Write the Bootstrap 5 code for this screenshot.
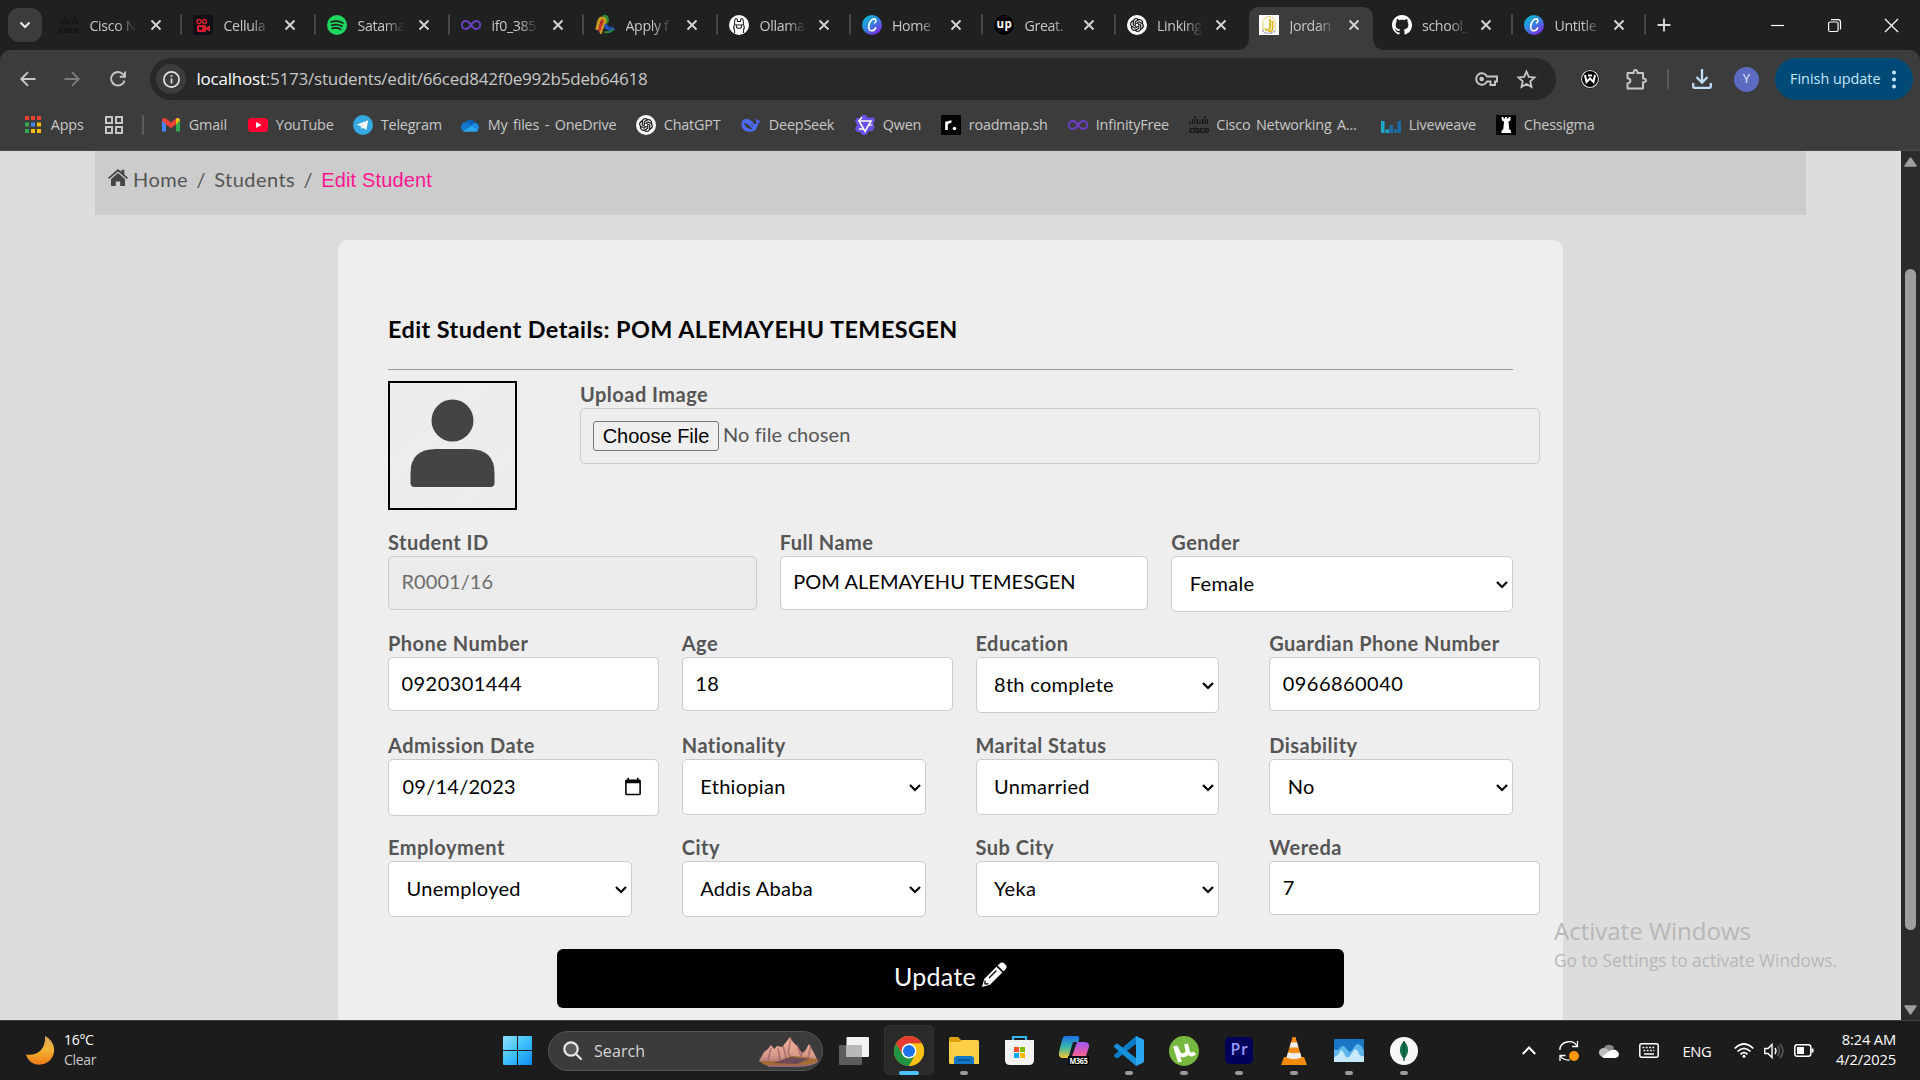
<!DOCTYPE html>
<html lang="en">
<head>
<meta charset="utf-8">
<title>Edit Student</title>
<link href="https://cdn.jsdelivr.net/npm/bootstrap@5.3.0/dist/css/bootstrap.min.css" rel="stylesheet">
<style>
:root{--ui:"Open Sans","Noto Sans",sans-serif;--doc:Lato,"Open Sans",sans-serif}
body{width:1920px;height:1080px;overflow:hidden;font-family:var(--ui);background:#ddd}
svg{display:block;overflow:visible;flex:none}
/* tab strip */
.tabstrip{height:50px;background:#1f2120;grid-template-columns:46px repeat(5,134px) repeat(7,132.5px) 44px 1fr;display:grid}
.tabsearch{width:34px;height:34px;border-radius:11px;background:#3c3c3c;margin:8px 0 0 8px}
.tab-item{position:relative;display:flex;align-items:center;padding-left:13px;font-size:14.2px;letter-spacing:-.35px;color:#c7c7c7}
.tab-item.sep::before{content:"";position:absolute;left:0;top:14px;width:2px;height:21px;background:#474747;border-radius:1px}
.tab-name{width:47px;margin:1px 0 0 10.5px;white-space:nowrap;overflow:hidden;-webkit-mask-image:linear-gradient(90deg,#000 58%,transparent 98%);mask-image:linear-gradient(90deg,#000 58%,transparent 98%)}
.tab-item .cross{margin-left:13px}
.tab-item:nth-child(n+7) .cross{margin-left:11px}
.tab-item .cross.plus{margin-left:0}
.tab-on{z-index:1}
.tab-on>.tab-shape{position:absolute;left:-9px;top:7px;z-index:-1}
.cross{stroke:#d5d5d5;stroke-width:1.9;fill:none}
.winctl{display:grid;grid-template-columns:57px 57px 57px;justify-content:end;align-items:center;justify-items:center;stroke:#fff;fill:none;stroke-width:1.2}
/* toolbar */
.chrome-bars{height:101px;background:#3c3c3c;border-radius:10px 10px 0 0;border-bottom:1px solid #4a4a4a}
.toolrow{height:58px;display:grid;align-items:center;justify-items:center;grid-template-columns:5px 45px 44px 47px 9px 1406px 10.5px 46.5px 46px 17px 51px 39px 9px 137.5px}
.omni{justify-self:stretch;height:42px;border-radius:21px;background:#282828;color:#c7c7c7;font-size:17px;letter-spacing:-.22px}
.omni .info{width:30px;height:30px;border-radius:15px;background:#3c3c3c;margin:0 10.5px 0 6px}
.upd{height:42px;width:100%;border-radius:21px;background:#004a77;color:#c2e7ff;font-size:14.4px;padding-left:15px}
.avatar{width:25px;height:25px;border-radius:50%;background:#5c6bc0;color:#e8e8ff;font-size:13px}
.marks{height:34px;display:grid;align-items:center;margin-left:24px;font-size:14.4px;letter-spacing:-.2px;word-spacing:2px;color:#c7c7c7;white-space:nowrap;grid-template-columns:80px 38px 20px 86px 105px 107px 176px 105px 114px 86px 127px 120.5px 192.5px 115px 120px}
.marks>div{display:flex;align-items:center}
.marks svg{width:20px;height:20px;margin-right:7.8px}
.vline{width:2px;height:20px;background:#5b5b5b;border-radius:1px}
.page-area{height:869px;overflow:hidden}
.doc{width:1901px;font-family:var(--doc);font-size:20px;color:#555}
.crumbs{width:1711px;height:64px;margin-left:95px;background:#ccc;padding:13px 0 0 13px;letter-spacing:.45px}
.crumbs .slash{margin:0 8.2px 0 8.4px}
.crumbs .pink{color:#ff1493;font-family:"Liberation Sans",Arial,sans-serif;letter-spacing:.15px;padding-top:1px}
.sheet{width:1225px;height:900px;margin:25px 0 0 338px;background:#eee;border-radius:10px;padding:75px 50px 0}
.sheet h3{font-size:23.4px;font-weight:700;color:#000;letter-spacing:.44px;line-height:28px;height:54px;margin:0}
.sheet hr{border-top:1px solid #9a9a9a;opacity:1}
.photo{width:129px;height:129px;border:2px solid #000;margin-right:63px;background:repeating-linear-gradient(135deg,#eee 0 3px,#ebebeb 3px 5px)}
.lbl{font-weight:700;line-height:26px;height:27px;white-space:nowrap;letter-spacing:.48px}
.filebox{width:960px;height:56px;border:1px solid #ccc;border-radius:5px;padding-left:12px;letter-spacing:.1px}
.filebtn{font:20px "Liberation Sans",Arial,sans-serif;height:30px;width:126px;border:1px solid #767676;border-radius:3px;background:#efefef;color:#000;padding:0;line-height:26px}
.grid3,.grid4{display:grid;column-gap:50px}
.grid3{grid-template-columns:repeat(3,341.67px);height:101px}
.grid4{grid-template-columns:repeat(4,243.75px);height:102px}
.sheet .form-control,.sheet .form-select{font-size:20px;color:#000;border:1px solid #ccc;border-radius:5px;line-height:27px}
.sheet .form-control{height:54px;width:calc(100% + 27px);padding:10px 12.5px 12px;letter-spacing:.45px}
.sheet .grid3 .form-control{letter-spacing:.05px;padding:9px 12.5px 13px}
.sheet .form-control:disabled{background:#ebebeb;color:#6d6d6d}
.sheet .form-control[type=date]{height:57px;padding:11px 12.5px 13px 13.5px;letter-spacing:.25px}
.sheet .form-select{height:56px;padding:11px 17px 13px 17.5px;letter-spacing:.3px;background:#fff url("data:image/svg+xml,%3Csvg xmlns='http://www.w3.org/2000/svg' viewBox='0 0 12 8'%3E%3Cpath d='M1 1l5 5 5-5' fill='none' stroke='%23000' stroke-width='2.2'/%3E%3C/svg%3E") no-repeat right 4px top 24px/12px 8px}
.upbtn{width:787.5px;height:59px;background:#000;color:#fff;border-radius:6px;font-size:25px;margin:4.5px auto 0;letter-spacing:.3px}
.vscroll{width:19px;background:#2b2b2b;padding:6px 3px 4px 3px}
.thumb{width:11px;height:661px;border-radius:6px;background:#9f9f9f;margin:102px 0 75px 1px}
.wmark{position:absolute;left:1554px;top:913px;color:#b7b7b7;line-height:36px;font-size:24px;white-space:nowrap}
.wmark div+div{font-size:17.3px;line-height:24px}
/* taskbar */
.tbar{height:60px;background:#1c1c1c;border-top:1px solid #3c403d;color:#fff;display:grid;align-items:center;justify-items:center;grid-template-columns:490px 55px 3px 275px 4px repeat(11,54.95px) 1fr 40px 40px 40px 40px 56px 4px 30px 30px 30px 77px 24px;font-size:14px;letter-spacing:-.3px;line-height:20px}
.tbar>div{position:relative;display:flex;align-items:center;justify-content:center;height:59px}
.wtext{margin:-2px 0 0 10px}
.clock{font-size:14.7px;letter-spacing:-.15px;margin-top:-3px}
.find{width:275px;height:40px!important;border-radius:20px;background:#3b3b3b;border:1px solid #555;justify-content:start!important;font-size:16px;color:#d5d5d5;letter-spacing:.1px}
.run::after{content:"";position:absolute;bottom:5px;left:23.5px;width:8px;height:4px;border-radius:2px;background:#999}
.run.cur::after{left:17px;width:20px;background:#4cc2ff}
.cur::before{content:"";position:absolute;left:2px;top:4px;width:50px;height:50px;border-radius:5px;background:#2a2a2a;border:1px solid #333}
.cur svg{position:relative}
.tbar>.app{width:55px}
</style>
<script src="https://cdn.jsdelivr.net/npm/bootstrap@5.3.0/dist/js/bootstrap.bundle.min.js"></script>
</head>
<body class="d-flex flex-column m-0">
<svg width="0" height="0" class="position-absolute">
<defs>
<linearGradient id="gcanva" x1="0" y1="0" x2=".7" y2="1"><stop offset="0" stop-color="#00c4cc"/><stop offset=".5" stop-color="#2f8be0"/><stop offset="1" stop-color="#7d2ae8"/></linearGradient>
<linearGradient id="gmoon" x1="0" y1="0" x2="0" y2="1"><stop offset="0" stop-color="#d9a066"/><stop offset=".45" stop-color="#f2b632"/><stop offset="1" stop-color="#f07a1a"/></linearGradient>
<linearGradient id="gwin" x1="0" y1="0" x2="1" y2="1"><stop offset="0" stop-color="#8fe3ff"/><stop offset=".5" stop-color="#3ec0fb"/><stop offset="1" stop-color="#0a8cf0"/></linearGradient>
<linearGradient id="gm1" x1="0" y1="0" x2="0" y2="1"><stop offset="0" stop-color="#1c6fe8"/><stop offset=".5" stop-color="#37b8a8"/><stop offset="1" stop-color="#f2c230"/></linearGradient>
<linearGradient id="gm2" x1="0" y1="0" x2="0" y2="1"><stop offset="0" stop-color="#9a5cf0"/><stop offset=".5" stop-color="#e85aa8"/><stop offset="1" stop-color="#ff9a4a"/></linearGradient>
<linearGradient id="grock" x1="0" y1="0" x2="0" y2="1"><stop offset="0" stop-color="#f4b39a"/><stop offset=".6" stop-color="#d99a88"/><stop offset="1" stop-color="#8a6070"/></linearGradient>
</defs>
<symbol id="x" viewBox="0 0 12 12"><path d="M1.5 1.5l9 9m0-9l-9 9"/></symbol>
<symbol id="cisco" viewBox="0 0 20 20"><path d="M1 6v3M3.5 4v5M6 1v8M8.5 4v5M11 6v3M13.5 4v5M16 1v8M18.5 4v5" stroke="#111" stroke-width="1.1"/><text x="0" y="18" font-family="Open Sans,sans-serif" font-weight="700" font-size="9" textLength="20" fill="#111">cisco</text></symbol>
<symbol id="inf" viewBox="0 0 20 20"><path d="M10 10C8 7 6.500 6 4.800 6a4 4 0 000 8C6.500 14 8 13 10 10s3.500-4 5.200-4a4 4 0 010 8C13.500 14 12 13 10 10z" fill="none" stroke="#6b3fc4" stroke-width="2"/></symbol>
<symbol id="canva" viewBox="0 0 20 20"><circle cx="10" cy="10" r="10" fill="url(#gcanva)"/><path d="M12.600 7.900c1.700-.9 2-4-.5-4-2.900 0-5.400 4.400-5.400 7.900 0 2.500 1.200 4 3.100 4 1.700 0 3.200-1.300 3.900-2.900" fill="none" stroke="#fff" stroke-width="1.600" stroke-linecap="round"/></symbol>
<symbol id="gpt" viewBox="0 0 20 20"><circle cx="10" cy="10" r="10" fill="#fff"/><g transform="translate(3.200 3.200) scale(.567)"><path d="M22.2819 9.8211a5.9847 5.9847 0 0 0-.5157-4.9108 6.0462 6.0462 0 0 0-6.5098-2.9A6.0651 6.0651 0 0 0 4.9807 4.1818a5.9847 5.9847 0 0 0-3.9977 2.9 6.0462 6.0462 0 0 0 .7427 7.0966 5.98 5.98 0 0 0 .511 4.9107 6.051 6.051 0 0 0 6.5146 2.9001A5.9847 5.9847 0 0 0 13.2599 24a6.0557 6.0557 0 0 0 5.7718-4.2058 5.9894 5.9894 0 0 0 3.9977-2.9001 6.0557 6.0557 0 0 0-.7475-7.0729zm-9.022 12.6081a4.4755 4.4755 0 0 1-2.8764-1.0408l.1419-.0804 4.7783-2.7582a.7948.7948 0 0 0 .3927-.6813v-6.7369l2.02 1.1686a.071.071 0 0 1 .038.052v5.5826a4.504 4.504 0 0 1-4.4945 4.4944zm-9.6607-4.1254a4.4708 4.4708 0 0 1-.5346-3.0137l.142.0852 4.783 2.7582a.7712.7712 0 0 0 .7806 0l5.8428-3.3685v2.3324a.0804.0804 0 0 1-.0332.0615L9.74 19.9502a4.4992 4.4992 0 0 1-6.1408-1.6464zM2.3408 7.8956a4.485 4.485 0 0 1 2.3655-1.9728V11.6a.7664.7664 0 0 0 .3879.6765l5.8144 3.3543-2.0201 1.1685a.0757.0757 0 0 1-.071 0l-4.8303-2.7865A4.504 4.504 0 0 1 2.3408 7.872zm16.5963 3.8558L13.1038 8.364 15.1192 7.2a.0757.0757 0 0 1 .071 0l4.8303 2.7913a4.4944 4.4944 0 0 1-.6765 8.1042v-5.6772a.79.79 0 0 0-.407-.667zm2.0107-3.0231l-.142-.0852-4.7735-2.7818a.7759.7759 0 0 0-.7854 0L9.409 9.2297V6.8974a.0662.0662 0 0 1 .0284-.0615l4.8303-2.7866a4.4992 4.4992 0 0 1 6.6802 4.66zM8.3065 12.863l-2.02-1.1638a.0804.0804 0 0 1-.038-.0567V6.0742a4.4992 4.4992 0 0 1 7.3757-3.4537l-.142.0805L8.704 5.459a.7948.7948 0 0 0-.3927.6813zm1.0976-2.3654l2.602-1.4998 2.6069 1.4998v2.9994l-2.5974 1.4997-2.6067-1.4997Z" stroke="#000" stroke-width=".5"/></g></symbol>
</svg>

<header class="tabstrip">
  <div><div class="tabsearch d-flex align-items-center justify-content-center"><svg width="12" height="8" viewBox="0 0 12 8"><path d="M1.500 1.500L6 6l4.500-4.500" fill="none" stroke="#e8e8e8" stroke-width="2.200"/></svg></div></div>
  <div class="tab-item"><svg width="20" height="20"><use href="#cisco"/></svg><span class="tab-name">Cisco N</span><svg class="cross" width="12" height="12"><use href="#x"/></svg></div>
  <div class="tab-item sep"><svg width="20" height="20"><rect width="20" height="20" rx="2" fill="#0d1016"/><g fill="#d81f2e"><rect x="4" y="10" width="9" height="7" rx="1"/><path d="M13 12.500l4-2v6l-4-2z"/></g><circle cx="6" cy="6.500" r="2" fill="none" stroke="#d81f2e" stroke-width="1.400"/><circle cx="11.500" cy="6.500" r="2" fill="none" stroke="#d81f2e" stroke-width="1.400"/><rect x="6" y="12" width="3" height="3" fill="#0d1016"/></svg><span class="tab-name">Cellula</span><svg class="cross" width="12" height="12"><use href="#x"/></svg></div>
  <div class="tab-item sep"><svg width="20" height="20"><circle cx="10" cy="10" r="10" fill="#1ed760"/><path d="M4 7c4-1.300 8.500-1 12 1M4.600 10.300c3.500-1 7-.7 10.200 1M5.200 13.400c3-.8 5.800-.5 8.400.9" fill="none" stroke="#17241b" stroke-width="1.700" stroke-linecap="round"/></svg><span class="tab-name">Satama</span><svg class="cross" width="12" height="12"><use href="#x"/></svg></div>
  <div class="tab-item sep"><svg width="20" height="20"><use href="#inf"/></svg><span class="tab-name">if0_385</span><svg class="cross" width="12" height="12"><use href="#x"/></svg></div>
  <div class="tab-item sep"><svg width="20" height="20" fill="none" stroke-width="3.200"><path d="M8 1.500c5-1 5 3.500 3.500 6.500" stroke="#2b8a3a"/><path d="M2 15c1-5 1.500-12 5-12s4 4 1.500 7.500S5 17 7 18" stroke="#c99a24"/><path d="M4.500 16C4 12 8 9 7 5" stroke="#c9342b" stroke-width="2.600"/><path d="M11 9.500c0 4 4 6 8 3.500" stroke="#2451b8" stroke-width="4"/><path d="M9.500 17c4 1 7-.5 9-3" stroke="#2b8a3a" stroke-width="2"/></svg><span class="tab-name">Apply f</span><svg class="cross" width="12" height="12"><use href="#x"/></svg></div>
  <div class="tab-item sep"><svg width="20" height="20"><circle cx="10" cy="10" r="10" fill="#fff"/><g fill="none" stroke="#222" stroke-width="1.100"><path d="M5.500 18v-3c-1-2-1-4 .2-5.500-.5-3 .3-6 1.300-6s1.500 2 1.500 3h3c0-1 .5-3 1.500-3s1.800 3 1.300 6C15.500 11 15.500 13 14.500 15v3"/><ellipse cx="10" cy="11.500" rx="2.600" ry="1.800"/></g><circle cx="7" cy="9.800" r=".7"/><circle cx="13" cy="9.800" r=".7"/></svg><span class="tab-name">Ollama</span><svg class="cross" width="12" height="12"><use href="#x"/></svg></div>
  <div class="tab-item sep"><svg width="20" height="20"><use href="#canva"/></svg><span class="tab-name">Home</span><svg class="cross" width="12" height="12"><use href="#x"/></svg></div>
  <div class="tab-item sep"><svg width="20" height="20"><circle cx="10" cy="10" r="10" fill="#000"/><text x="2.500" y="13" font-family="Open Sans,sans-serif" font-weight="700" font-size="11.500" textLength="15" fill="#fff">up</text></svg><span class="tab-name">Great.</span><svg class="cross" width="12" height="12"><use href="#x"/></svg></div>
  <div class="tab-item sep"><svg width="20" height="20"><use href="#gpt"/></svg><span class="tab-name">Linking</span><svg class="cross" width="12" height="12"><use href="#x"/></svg></div>
  <div class="tab-item tab-on"><svg class="tab-shape" width="148" height="43" viewBox="0 0 148 43"><path d="M0 43C8 43 12 38 12 31V11Q12 0 23 0H125Q136 0 136 11V31C136 38 140 43 148 43z" fill="#3c3c3c"/></svg><svg width="20" height="20"><rect width="20" height="20" fill="#fff"/><path d="M4 15V6.500C4 4.500 7 1.500 10 1.500s6 3 6 5V15" fill="none" stroke="#e2cf6a"/><path d="M11 4v8.500c0 3-4.500 3-5 1M13.500 6v8c0 2.500-3 3-4 2" fill="none" stroke="#d9b413" stroke-width="1.700"/><path d="M3.500 15c2 4.500 11 4.500 13 0" fill="none" stroke="#9d93c8" stroke-width="1.400" stroke-dasharray="2 1"/></svg><span class="tab-name">Jordan</span><svg class="cross" width="12" height="12"><use href="#x"/></svg></div>
  <div class="tab-item"><svg width="20" height="20" viewBox="0 0 16 16"><path fill="#fff" d="M8 0C3.580 0 0 3.580 0 8c0 3.540 2.290 6.530 5.470 7.590.4.070.55-.170.55-.380 0-.190-.010-.820-.010-1.490-2.010.370-2.530-.490-2.690-.940-.090-.230-.480-.940-.820-1.130-.280-.150-.680-.520-.010-.530.630-.010 1.080.580 1.230.820.720 1.210 1.870.870 2.330.660.070-.520.280-.870.510-1.070-1.780-.200-3.640-.890-3.640-3.950 0-.870.310-1.590.820-2.150-.080-.200-.360-1.020.080-2.120 0 0 .670-.210 2.200.820.640-.180 1.320-.270 2-.270s1.360.090 2 .270c1.530-1.040 2.200-.820 2.200-.820.440 1.100.160 1.920.080 2.120.510.560.820 1.270.820 2.150 0 3.070-1.870 3.750-3.650 3.950.290.250.540.730.540 1.480 0 1.070-.010 1.930-.010 2.200 0 .210.150.460.550.380A8.010 8.010 0 0 0 16 8c0-4.420-3.580-8-8-8z"/></svg><span class="tab-name">school_</span><svg class="cross" width="12" height="12"><use href="#x"/></svg></div>
  <div class="tab-item sep"><svg width="20" height="20"><use href="#canva"/></svg><span class="tab-name">Untitle</span><svg class="cross" width="12" height="12"><use href="#x"/></svg></div>
  <div class="tab-item sep"><svg width="14" height="14" viewBox="0 0 14 14" class="cross plus"><path d="M7 .5v13M.5 7h13"/></svg></div>
  <div class="winctl"><svg width="13" height="13"><path d="M0 6.500h13"/></svg><svg width="13" height="13"><rect x=".6" y="3" width="9.500" height="9.500" rx="1.500"/><path d="M3 .700h7q2.500 0 2.500 2.500v7.300"/></svg><svg width="13" height="13"><path d="M0 0l13 13M13 0L0 13"/></svg></div>
</header>

<div style="background:#1f2120"><div class="chrome-bars">
  <div class="toolrow">
    <i></i>
    <svg width="16" height="16" viewBox="0 0 16 16" fill="none" stroke="#c7c7c7" stroke-width="1.900"><path d="M15.500 8H1.500M8 1.200L1.200 8 8 14.800"/></svg>
    <svg width="16" height="16" viewBox="0 0 16 16" fill="none" stroke="#7c7c7c" stroke-width="1.900"><path d="M.5 8h14M8 1.200L14.800 8 8 14.800"/></svg>
    <svg width="16" height="16" viewBox="0 0 16 16" fill="none" stroke="#c7c7c7" stroke-width="1.900"><path d="M14.500 9.500A6.800 6.800 0 1 1 13 3.200L14.800 5M15 .5v5.300H9.700"/></svg>
    <i></i>
    <div class="omni d-flex align-items-center"><div class="info d-flex align-items-center justify-content-center"><svg width="17" height="17" viewBox="0 0 17 17" fill="none" stroke="#e3e3e3" stroke-width="1.700"><circle cx="8.500" cy="8.500" r="7.600"/><path d="M8.500 7.500v5M8.500 4.300v1.800"/></svg></div><span><span class="text-white">localhost</span>:5173/students/edit/66ced842f0e992b5deb64618</span>
      <svg class="ms-auto" width="23" height="16" viewBox="0 0 23 16" fill="none" stroke="#c7c7c7" stroke-width="1.900"><path d="M12 5.500h10v5h-2V14h-4.500v-3.500H12A5.700 5.700 0 1 1 12 5.500z"/><circle cx="6.700" cy="8" r="1.400" fill="#c7c7c7"/></svg>
      <svg width="19" height="18" viewBox="0 0 24 23" fill="none" stroke="#c7c7c7" stroke-width="2.300" style="margin:0 20px 0 19px"><path d="M12 2l3 6.800 7.300.7-5.500 4.900 1.600 7.200L12 17.800l-6.400 3.800 1.600-7.200L1.700 9.500 9 8.800z"/></svg></div>
    <i></i>
    <svg width="20" height="20"><circle cx="10" cy="10" r="9.400" fill="#000"/><circle cx="10" cy="10" r="8.500" fill="none" stroke="#ddd" stroke-width="1.100"/><path d="M5 6l1.500 7L10 9.500 13.500 13 15 6M8 6.500h4" fill="none" stroke="#fff" stroke-width="2"/></svg>
    <svg width="21" height="21" viewBox="0 0 21 21" fill="none" stroke="#c7c7c7" stroke-width="2" stroke-linejoin="round"><path d="M1.500 4h6.300c-.6-4 4-4 3.600 0H17v5.500c4-.3 4 4.100 0 3.800V19.500H1.500v-5c3.800-.4 3.800-5 0-5.200z"/></svg>
    <i class="vline"></i>
    <svg width="20" height="20" viewBox="0 0 20 20" fill="none" stroke="#c2dcf8" stroke-width="2.300"><path d="M10 0v13M4.500 8L10 13.500 15.500 8M1.200 14v3.800q0 1 1 1h15.600q1 0 1-1V14"/></svg>
    <div class="avatar d-flex align-items-center justify-content-center">Y</div>
    <i></i>
    <div class="upd d-flex align-items-center">Finish update<svg class="ms-auto" width="21" height="19" fill="#c2e7ff"><circle cx="2" cy="2.500" r="2"/><circle cx="2" cy="9.500" r="2"/><circle cx="2" cy="16.500" r="2"/></svg></div>
  </div>
  <div class="marks">
    <div><svg viewBox="0 0 20 20"><g fill="#ea4335"><path d="M1 1h4v4H1zM7 1h4v4H7zM13 1h4v4h-4z"/></g><g fill="#34a853"><path d="M1 7.500h4v4H1zM1 14h4v4H1z"/></g><path d="M7 7.500h4v4H7z" fill="#4285f4"/><path d="M13 7.500h4v4h-4zM7 14h4v4H7zM13 14h4v4h-4z" fill="#fbbc04"/></svg><span style="margin-left:-1px">Apps</span></div>
    <div><svg viewBox="0 0 20 20" fill="none" stroke="#c7c7c7" stroke-width="2"><path d="M2 2h6v6H2zM12 2h6v6h-6zM2 12h6v6H2zM12 12h6v6h-6z"/></svg></div>
    <div><i class="vline"></i></div>
    <div><svg viewBox="0 0 20 20"><path d="M0 5v11.500h4V8z" fill="#4285f4"/><path d="M18 5v11.500h-4V8z" fill="#34a853"/><path d="M0 5.500C0 3 2.500 2.500 4 3.500L9 7.500l5-4v6L9 13 4 9.500z" fill="#ea4335"/><path d="M14 3.500C15.500 2.500 18 3 18 5.500L14 9.500z" fill="#fbbc04"/></svg><span style="margin-left:-1px">Gmail</span></div>
    <div><svg viewBox="0 0 20 20"><rect y="3" width="20" height="14" rx="3.500" fill="#ff0033"/><path d="M8 7l5.500 3L8 13z" fill="#fff"/></svg>YouTube</div>
    <div><svg viewBox="0 0 20 20"><circle cx="10" cy="10" r="10" fill="#34a8e0"/><path d="M3.500 9.800L15.200 5.300 13.300 15l-3.400-2.500-1.700 1.700-.5-3.200z" fill="#fff"/><path d="M7.700 11l5.300-3.600-4.300 4.200-.5 2.600z" fill="#b5d4e8"/></svg>Telegram</div>
    <div><svg viewBox="0 0 20 20"><path d="M5 7.500A6 6 0 0 1 15.500 8L9 13z" fill="#0f5fb5"/><path d="M4.500 16.500A4.700 4.700 0 0 1 5 7.300c3 0 5 3 8 5z" fill="#1578d0"/><path d="M15 7.800a4.500 4.500 0 0 1 1 8.700L10 11z" fill="#1a8ae0"/><path d="M3 16l9-5.300 6 5.300q-1 .700-2 .700H5q-1 0-2-.700z" fill="#28a8ea"/></svg>My files - OneDrive</div>
    <div><svg><use href="#gpt"/></svg>ChatGPT</div>
    <div><svg viewBox="0 0 20 20"><path d="M19.500 5c-1 1-2.200.8-3 .3-1.200-.8-.8-2-1-2.500-1.300 1.200-1 3 .2 4-.7 4-3 3-4.700-.500C9.500 4.500 5 3 2 5c-2.500 3-2 7.500 1 10 3 2.300 7.500 2.500 10.500.2 2-.200 2.500-.7 1.200-1.500C16.500 11.500 17 10 17.200 8c1.500-.5 2.300-1.500 2.300-3z" fill="#4d6bfe"/><path d="M3 8c3 .2 5.500 2.500 8.500 6-4 .5-7.500-2-8.500-6zM9.500 9c1.800 0 3 1.500 3 3" fill="#3c3c3c"/></svg>DeepSeek</div>
    <div><svg viewBox="0 0 20 20"><path d="M7 0h4l1.500 2.500H19l1 3-2 3.500 1.500 3-2 4h-3.500L11 20H7l-1.500-3H2L0 13.500 2 10 0 6l2-3h3.500z" fill="#6a4fe8"/><path d="M4 6h12l-6 10.500z" fill="none" stroke="#fff" stroke-width="1.600"/><path d="M7 2L4 6M17.500 9.500L13 11M4 14h5" stroke="#fff" stroke-width="1.300"/></svg>Qwen</div>
    <div><svg viewBox="0 0 20 20"><rect width="20" height="20" rx="1" fill="#000"/><path d="M5.500 15V6.500M5.500 9.500Q7 6.300 10.500 6.800" stroke="#fff" stroke-width="2.600" fill="none"/><circle cx="13.500" cy="13.500" r="1.800" fill="#fff"/></svg>roadmap.sh</div>
    <div><svg><use href="#inf"/></svg>InfinityFree</div>
    <div><svg><use href="#cisco"/></svg>Cisco Networking A...</div>
    <div><svg viewBox="0 0 20 20"><path d="M0 6h3.500v12H0zM4.500 14.500H8V18H4.500z" fill="#1aa9c9"/><path d="M8.500 10H12v8H8.500zM12.800 14h3v4h-3zM16.500 6H20v12h-3.500z" fill="#1d6ca8"/></svg>Liveweave</div>
    <div><svg viewBox="0 0 20 20"><rect width="20" height="20" fill="#000"/><path d="M5.500 2h2v1.500h1.500V2h2v1.500h1.500V2h2v3.500l-2 1 .7 7.500 1.800 2v2h-9.500v-2l1.800-2 .7-7.500-2-1z" fill="#fff"/></svg>Chessigma</div>
  </div>
</div></div>

<main class="page-area d-flex">
  <div class="doc">
    <nav class="crumbs d-flex">
      <svg width="20" height="17" viewBox="0 0 20 17" fill="#444" style="margin:5px 5px 0 0"><path d="M10 0l3.500 3V.700h2.800v4.700L20 8.800l-1 1.200-9-7.600L1 10 0 8.800z"/><path d="M10 4l7 5.900V17h-4.800v-4.500H7.800V17H3V9.900z"/></svg>
      <span>Home</span><span class="slash">/</span><span>Students</span><span class="slash">/</span><span class="pink">Edit Student</span>
    </nav>
    <section class="sheet">
      <h3>Edit Student Details: POM ALEMAYEHU TEMESGEN</h3>
      <hr class="m-0">
      <div class="d-flex" style="margin-top:11px;height:148px">
        <div class="photo"><svg width="125" height="125" viewBox="0 0 125 125" fill="#444"><circle cx="62.500" cy="37.500" r="21"/><path d="M20.500 100V90Q20.500 66 46 66H79Q104.500 66 104.500 90V100Q104.500 104 100.500 104H24.500Q20.500 104 20.500 100z"/></svg></div>
        <div>
          <div class="lbl">Upload Image</div>
          <div class="filebox d-flex align-items-center"><button class="filebtn" type="button">Choose File</button><span class="ps-1 pb-1">No file chosen</span></div>
        </div>
      </div>
      <div class="grid3">
        <div><div class="lbl">Student ID</div><input class="form-control" value="R0001/16" disabled></div>
        <div><div class="lbl">Full Name</div><input class="form-control" value="POM ALEMAYEHU TEMESGEN"></div>
        <div><div class="lbl">Gender</div><select class="form-select"><option>Female</option></select></div>
      </div>
      <div class="grid4">
        <div><div class="lbl">Phone Number</div><input class="form-control" value="0920301444"></div>
        <div><div class="lbl">Age</div><input class="form-control" value="18"></div>
        <div><div class="lbl">Education</div><select class="form-select"><option>8th complete</option></select></div>
        <div><div class="lbl">Guardian Phone Number</div><input class="form-control" value="0966860040"></div>
      </div>
      <div class="grid4">
        <div><div class="lbl">Admission Date</div><input type="date" class="form-control" value="2023-09-14"></div>
        <div><div class="lbl">Nationality</div><select class="form-select"><option>Ethiopian</option></select></div>
        <div><div class="lbl">Marital Status</div><select class="form-select"><option>Unmarried</option></select></div>
        <div><div class="lbl">Disability</div><select class="form-select"><option>No</option></select></div>
      </div>
      <div class="grid4" style="height:110px">
        <div><div class="lbl">Employment</div><select class="form-select"><option>Unemployed</option></select></div>
        <div><div class="lbl">City</div><select class="form-select"><option>Addis Ababa</option></select></div>
        <div><div class="lbl">Sub City</div><select class="form-select"><option>Yeka</option></select></div>
        <div><div class="lbl">Wereda</div><input class="form-control" value="7"></div>
      </div>
      <div class="upbtn d-flex align-items-center justify-content-center"><span style="padding-bottom:2px">Update</span><svg class="mb-2" style="margin-left:6px" width="25" height="25" viewBox="0 0 25 25" fill="#fff"><path d="M17.500 1.800q2.500-2.500 4.800-.3l1.300 1.300q2.200 2.300-.3 4.800l-1.800 1.800-5.800-5.800zM14.500 4.800l5.800 5.800L8 22.800 0 25l2.200-8z"/><path d="M14.500 8.500L7 16M3 18.500v3.300h3.500" stroke="#000" stroke-width="1.300" fill="none"/></svg></div>
    </section>
  </div>
  <div class="vscroll"><svg width="13" height="10"><path d="M6.500 1L12 9H1z" fill="#9f9f9f" stroke="#9f9f9f" stroke-width="1.500" stroke-linejoin="round"/></svg><div class="thumb"></div><svg width="13" height="10"><path d="M6.500 9L12 1H1z" fill="#9f9f9f" stroke="#9f9f9f" stroke-width="1.500" stroke-linejoin="round"/></svg></div>
</main>
<div class="wmark"><div>Activate Windows</div><div>Go to Settings to activate Windows.</div></div>

<footer class="tbar">
  <div class="w-100 justify-content-start ps-4"><svg style="margin-left:2px" width="28" height="29" viewBox="0 0 28 29"><path d="M19 0c12 6 12 22 1 27C12 31 3 28 0 18.500c11 2 20-5 19-18.500z" fill="url(#gmoon)"/></svg><div class="wtext"><div>16°C</div><div style="color:#c8c8c8">Clear</div></div></div>
  <div><svg width="29" height="29"><path d="M0 1q0-1 1-1h13v14H0zM15 0h13q1 0 1 1v13H15zM0 15h14v14H1q-1 0-1-1zM15 15h14v13q0 1-1 1H15z" fill="url(#gwin)"/></svg></div>
  <i></i>
  <div class="find"><svg width="19" height="19" style="margin:0 12px 0 14px" fill="none" stroke="#e8e8e8" stroke-width="2.200"><circle cx="8" cy="8" r="6.700" fill="#5a5a5a"/><path d="M13 13l5 5" stroke-linecap="round"/></svg>Search<svg class="ms-auto" style="margin-right:3px" width="60" height="30" viewBox="0 0 60 30"><path d="M0 25l5-9 4-3 3-4 3 4 3-3 5 1 5-6 3-4 3 5 5 5 4 6 3-2 4-7 4 7 3 6 2 5q-8 6-25 5H10z" fill="url(#grock)"/><path d="M24 9l3 13M12 12l-3 12M19 12l2 12M32 2l-3 15 6 8M44 16l-4 8M52 9l-3 13M38 8l4 12" stroke="#8c5363" stroke-width="1.600" fill="none" opacity=".6"/><path d="M0 25h20l12-5 14 1 14 3q-6 5-20 5H6z" fill="#a56b32"/><path d="M14 27l18-6 18 2-12 5z" fill="#6b4a5a"/></svg></div>
  <i></i>
  <div class="app"><svg width="30" height="28"><rect y="8" width="23" height="20" rx="1" fill="#5c5c5c"/><rect x="7.500" width="22.500" height="20" rx="1" fill="#f2f2f2"/><path d="M7.500 8H23v12H7.500z" fill="#b9b9b9"/></svg></div>
  <div class="app run cur"><svg width="30" height="30" viewBox="0 0 48 48"><circle cx="24" cy="24" r="24" fill="#fbc116"/><path d="M24 24L13.600 30 3.200 12A24 24 0 0 1 44.800 12H24z" fill="#e33b2e"/><path d="M3.200 12A24 24 0 0 0 24 48l10.400-18H13.600z" fill="#229342"/><path d="M24 12h20.800A24 24 0 0 1 24 48l10.400-18z" fill="#fbc116"/><circle cx="24" cy="24" r="12" fill="#fff"/><circle cx="24" cy="24" r="9.500" fill="#1a73e8"/></svg></div>
  <div class="app run"><svg width="30" height="27"><path d="M0 1.500Q0 0 1.500 0H9l4 4v3H0z" fill="#e0a008"/><path d="M0 5h10l3-2h15.500Q30 3 30 4.500V27H1.500Q0 27 0 25.500z" fill="#fdce48"/><path d="M5 27v-5q0-3 3-3h14q3 0 3 3v5z" fill="#1178c8"/><path d="M9 23h12" stroke="#0a4c8c" stroke-width="1.500"/></svg></div>
  <div class="app"><svg width="29" height="29"><path d="M8 6V1h13v5" fill="none" stroke="#35b5ee" stroke-width="2.200"/><path d="M0 4h29v20q0 5-5 5H5q-5 0-5-5z" fill="#f2f2f2"/><path d="M9 11h5v5H9z" fill="#f25022"/><path d="M15 11h5v5h-5z" fill="#7fba00"/><path d="M9 17h5v5H9z" fill="#00a4ef"/><path d="M15 17h5v5h-5z" fill="#ffb900"/></svg></div>
  <div class="app"><svg width="30" height="29"><path d="M7 0h11q3 0 2 4l-5 14q-1 4-5 4H4q-5 0-4-6L3 4q1-4 4-4z" fill="url(#gm1)"/><path d="M17 6h8q6 0 5 5l-3 9q-1 3-4 3h-7l-5 5q-2-1-1-5l4-13q1-4 3-4z" fill="url(#gm2)"/><path d="M14 6h4l-6 17H9z" fill="#15202a"/><rect x="9" y="20" width="21" height="9" rx="1" fill="#000"/><text x="10.500" y="27.500" font-family="Open Sans,sans-serif" font-weight="700" font-size="8" textLength="18" lengthAdjust="spacingAndGlyphs" fill="#fff">M365</text></svg></div>
  <div class="app run"><svg width="30" height="30"><path d="M22 0v8L4 22q-1 .5-2 0l-2-2V19z" fill="#0a7cc4"/><path d="M22 30v-8L4 8Q3 7.500 2 8L0 10v1z" fill="#1590dc"/><path d="M22 0l7 3.200q1 .5 1 1.800v20q0 1.300-1 1.800L22 30z" fill="#2aa6f2"/></svg></div>
  <div class="app run"><svg width="30" height="30"><circle cx="15" cy="15" r="15" fill="#76b83f"/><path d="M6 10l5 16M7.500 11c2 8 4 9 8 8 3-1 3.500-3 2.500-7l-1-4M18 12c1 6 4 8 8 5" fill="none" stroke="#fff" stroke-width="4"/></svg></div>
  <div class="app run"><svg width="28" height="27"><rect width="28" height="27" rx="5" fill="#00005b"/><text x="5.500" y="18" font-family="Open Sans,sans-serif" font-weight="600" font-size="16" textLength="17" fill="#9999ff">Pr</text></svg></div>
  <div class="app run"><svg width="26" height="28"><path d="M3 20h20l3 8H0z" fill="#f28a0c"/><path d="M11.500 0h3L21 22q-8 4-16 0z" fill="#f58a14"/><path d="M10 5.500h6l1.500 5h-9zM7 15.500q6 1.500 12 0l1.500 5q-7.500 3-15 0z" fill="#eee"/></svg></div>
  <div class="app run"><svg width="30" height="23"><rect width="30" height="23" rx="1" fill="#1976c5"/><path d="M0 10q3 3 6-1t6 0 4 4 5-6 9 5v11H0z" fill="#5fb6ea"/><path d="M0 18q4-1 7-7 2 1 5 7 3 1 4-1t5-7q3 1 4 5 2 3 5 2v6H0z" fill="#c5eafc"/></svg></div>
  <div class="app run"><svg width="28" height="28"><circle cx="14" cy="14" r="14" fill="#f8f8f8"/><path d="M14 4c5 5 6 12 0 18-6-6-5-13 0-18z" fill="#13714c"/><path d="M14 4v20" stroke="#0b4f35" stroke-width="1.200"/></svg></div>
  <i></i>
  <div><svg width="14" height="9" fill="none" stroke="#fff" stroke-width="2"><path d="M.8 8L7 1.500 13.200 8"/></svg></div>
  <div><svg width="20" height="20" fill="none" stroke="#fff" stroke-width="1.300"><path d="M.8 9C1 0 14-2 18 5M18.500 0v5.500H13M1 20v-5.500h5.500M1.500 15c2 3 4 4.500 9 4"/><circle cx="15" cy="15" r="5" fill="#ff9800" stroke="none"/></svg></div>
  <div><svg width="20" height="14"><path d="M5 4a5.500 5.500 0 0 1 10 0l-5 5z" fill="#8a8a8a"/><path d="M4 13A4.500 4.500 0 0 1 5 4q3 0 6 4z" fill="#bdbdbd"/><path d="M3 12.500L12 6q5-2 8 3.500 0 4-4 4.500H4.500z" fill="#fff"/></svg></div>
  <div><svg width="20" height="15" fill="none" stroke="#fff" stroke-width="1.500"><rect x=".8" y=".8" width="18.400" height="13.400" rx="2"/><path d="M3.500 4.500h13M4.500 7.500h11" stroke-dasharray="1.800 1.500" stroke-width="1.700"/><path d="M5 11h10"/></svg></div>
  <div style="font-size:14.7px">ENG</div>
  <i></i>
  <div><svg width="20" height="15" fill="none" stroke="#fff" stroke-width="1.700"><path d="M.7 5.500Q10-3.500 19.300 5.500M3.500 8.500q6.500-6.500 13 0M6.500 11.300q3.500-3.500 7 0"/><circle cx="10" cy="13.200" r="1.500" fill="#fff" stroke="none"/></svg></div>
  <div><svg width="20" height="16" fill="none" stroke="#fff" stroke-width="1.400"><path d="M.8 5.500v5H4L8 14.500v-13L4 5.500z"/><path d="M11 5q2 3 0 6"/><path d="M13.500 3q4 5 0 10M16 1q6 7 0 14" stroke="#5f5f5f"/></svg></div>
  <div><svg width="20" height="13" fill="none" stroke="#fff" stroke-width="1.500"><rect x=".8" y=".8" width="16" height="11.400" rx="2.500"/><rect x="3" y="3" width="7" height="7" fill="#fff" stroke="none"/><path d="M18.500 4.500v4" stroke-width="2"/></svg></div>
  <div class="w-100 justify-content-end text-end"><div class="clock">8:24 AM<br>4/2/2025</div></div>
</footer>
</body>
</html>
